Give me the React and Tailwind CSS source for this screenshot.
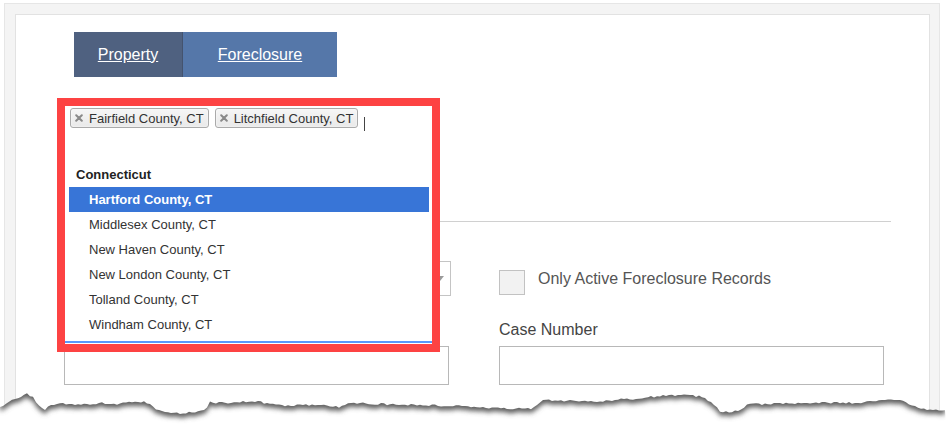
import React from "react";

const font = { fontFamily: '"Liberation Sans", Arial, sans-serif' };

const counties = [
  "Middlesex County, CT",
  "New Haven County, CT",
  "New London County, CT",
  "Tolland County, CT",
  "Windham County, CT",
];

// Anchor points of the torn paper edge (page coordinates)
const anchors = [
  [0, 408], [8, 402], [18, 398], [28, 394], [33, 397], [38, 404], [44, 410], [50, 406],
  [60, 404], [80, 405], [100, 403], [120, 404], [135, 401], [150, 403], [155, 408],
  [162, 412], [180, 413], [200, 412], [206, 408], [210, 402], [230, 403], [255, 401],
  [270, 404], [290, 406], [320, 404], [340, 407], [350, 403], [380, 404], [420, 405],
  [460, 406], [500, 408], [530, 409], [538, 404], [545, 400], [570, 401], [600, 401],
  [630, 399], [660, 396], [690, 395], [705, 397], [712, 404], [720, 411], [730, 413],
  [740, 410], [748, 404], [780, 404], [820, 403], [860, 403], [880, 401], [895, 399],
  [905, 402], [915, 406], [925, 409], [946, 411],
];

const TOP = 380;

function edgePoints() {
  const pts = [];
  for (let x = 0; x <= 946; x += 3) {
    let i = 0;
    while (i < anchors.length - 2 && anchors[i + 1][0] < x) i++;
    const [x0, y0] = anchors[i];
    const [x1, y1] = anchors[i + 1];
    const t = x1 === x0 ? 0 : Math.min(1, Math.max(0, (x - x0) / (x1 - x0)));
    const n = Math.sin(x * 12.9898) * 43758.5453;
    const jitter = (n - Math.floor(n) - 0.5) * 2.2;
    pts.push([x, y0 + (y1 - y0) * t + jitter - TOP]);
  }
  return pts;
}

function TornEdge() {
  const pts = edgePoints();
  const line = pts.map(([x, y]) => `${x},${y.toFixed(1)}`).join(" L");
  const below = `M${line} L946,44 L0,44 Z`;
  const paper = `M0,-10 L946,-10 L${[...pts].reverse().map(([x, y]) => `${x},${y.toFixed(1)}`).join(" L")} Z`;
  return (
    <svg
      className="absolute left-0 top-[380px]"
      width="946"
      height="44"
      viewBox="0 0 946 44"
    >
      <defs>
        <clipPath id="belowEdge">
          <path d={below} />
        </clipPath>
        <filter id="edgeBlur" x="-5%" y="-50%" width="110%" height="200%">
          <feGaussianBlur stdDeviation="2.8" />
        </filter>
      </defs>
      <path d={below} fill="#ffffff" />
      <g clipPath="url(#belowEdge)">
        <path d={paper} fill="#5e5e5e" transform="translate(0,4)" filter="url(#edgeBlur)" />
      </g>
    </svg>
  );
}

function RemoveIcon() {
  return (
    <svg width="8" height="8" viewBox="0 0 8 8" className="shrink-0">
      <path d="M1.2 1.2 L6.8 6.8 M6.8 1.2 L1.2 6.8" stroke="#8a8a8a" strokeWidth="2" strokeLinecap="round" />
    </svg>
  );
}

function Tag({ label }) {
  return (
    <div className="flex h-[20px] items-center gap-[6px] rounded-[3px] border border-[#aaaaaa] bg-gradient-to-b from-[#f6f6f6] to-[#e9e9e9] pl-[4px] pr-[4px] text-[13px] text-[#333333] shadow-[inset_0_0_2px_#ffffff]">
      <RemoveIcon />
      <span className="leading-none">{label}</span>
    </div>
  );
}

export default function App() {
  return (
    <div className="relative h-[424px] w-[946px] overflow-hidden bg-white" style={font}>
      {/* outer frame */}
      <div className="ml-[4px] mt-[3px] flex h-[440px] w-[936px] flex-col border border-[#e6e6e6] bg-[#f4f4f4] pl-[10px] pr-[9px] pt-[10px]">
        {/* page panel */}
        <div className="relative flex-1 border border-[#e2e2e2] bg-white pl-[48px] pt-[17px]">
          {/* tabs */}
          <div className="ml-[10px] flex h-[45px]">
            <div className="flex w-[109px] items-center justify-center border-r border-[#44536e] bg-[#4f6180] text-[16px] text-white underline">
              Property
            </div>
            <div className="flex w-[154px] items-center justify-center bg-[#5577a9] text-[16px] text-white underline">
              Foreclosure
            </div>
          </div>

          {/* county field area */}
          <div className="h-[144px]" />
          <div className="mr-[38px] border-t border-[#d0d0d0]" />

          {/* search fields */}
          <div className="mt-[39px] grid grid-cols-[385px_385px] gap-x-[50px]">
            <div className="flex h-[35px] w-[387px] items-center justify-end border border-[#c4c4c4] bg-white pr-[6px]">
              <svg width="8" height="5" viewBox="0 0 8 5">
                <path d="M0 0 L8 0 L4 5 Z" fill="#9a9a9a" />
              </svg>
            </div>
            <div className="flex items-start pt-[9px]">
              <div className="h-[25px] w-[26px] border border-[#c2c2c2] bg-[#f2f2f2]" />
              <span className="ml-[13px] text-[16px] leading-[18px] text-[#555555]">Only Active Foreclosure Records</span>
            </div>

            <div className="mt-[25px] flex flex-col">
              <div className="h-[18px]" />
              <div className="mt-[7px] h-[39px] border border-[#b8b8b8]" />
            </div>
            <div className="mt-[25px] flex flex-col">
              <span className="h-[18px] text-[16px] leading-[18px] text-[#444444]">Case Number</span>
              <div className="mt-[7px] h-[39px] border border-[#b8b8b8]" />
            </div>
          </div>

          {/* open county multi-select, highlighted */}
          <div className="absolute left-[41px] top-[83px] h-[254px] w-[383px] border-[8px] border-[#fd4343] bg-white">
            <div className="flex h-full flex-col overflow-hidden">
              <div className="flex h-[56px] items-start gap-[6px] pl-[5px] pt-[2px]">
                <Tag label="Fairfield County, CT" />
                <Tag label="Litchfield County, CT" />
                <div className="mt-[9px] h-[14px] w-px bg-[#444444]" />
              </div>
              <div className="flex flex-col border-b-2 border-[#5897fb] pb-[4px]">
                <div className="ml-[4px] mr-[3px] flex h-[25px] items-center pl-[7px] text-[13px] font-bold text-[#222222]">
                  Connecticut
                </div>
                <div className="ml-[4px] mr-[3px] flex h-[25px] items-center bg-[#3875d7] pl-[20px] text-[13px] font-bold text-white">
                  Hartford County, CT
                </div>
                {counties.map((c) => (
                  <div key={c} className="ml-[4px] mr-[3px] flex h-[25px] items-center pl-[20px] text-[13px] text-[#333333]">
                    {c}
                  </div>
                ))}
              </div>
            </div>
          </div>
        </div>
      </div>

      <TornEdge />
    </div>
  );
}
